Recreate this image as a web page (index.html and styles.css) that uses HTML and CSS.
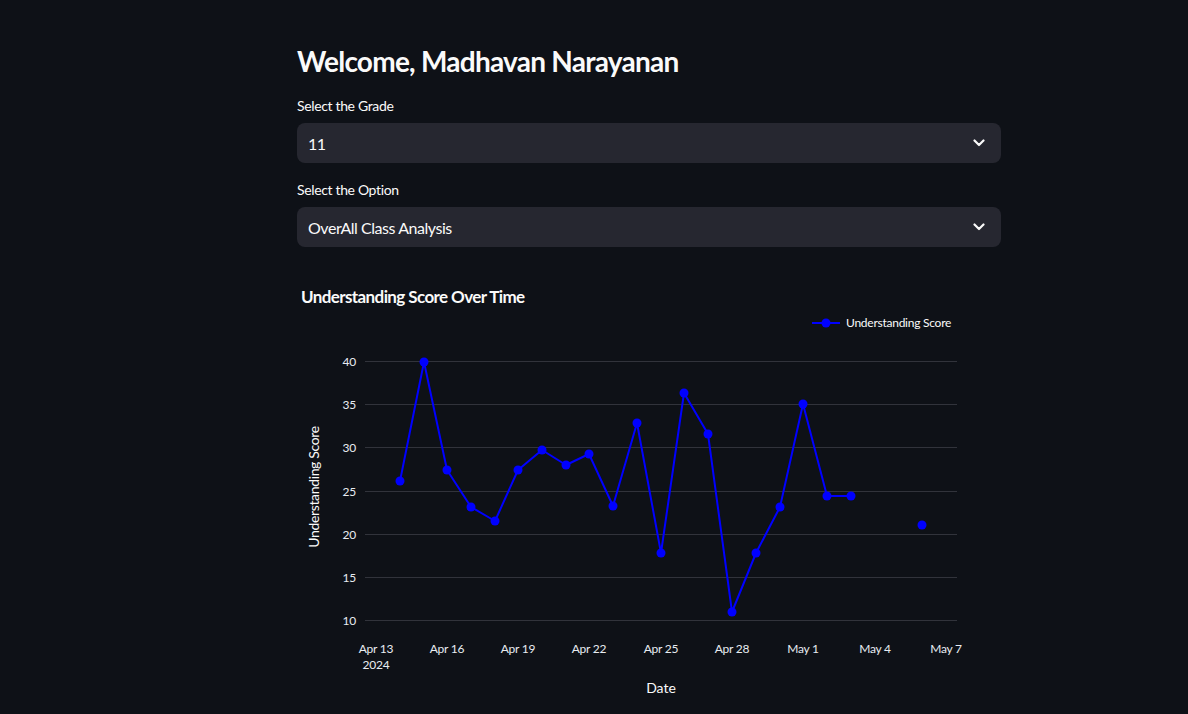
FILE: index.html
```html
<!DOCTYPE html>
<html>
<head>
<meta charset="utf-8">
<link rel="stylesheet" href="styles.css">
</head>
<body>
<div class="app">
  <main class="main">
    <h3 class="title">Welcome, Madhavan Narayanan</h3>
    <div class="field">
      <label class="label">Select the Grade</label>
      <div class="select">
        <span class="value">11</span>
        <svg class="chev" width="12" height="8" viewBox="0 0 12 8"><path d="M1.5 1.5 L6 6 L10.5 1.5" fill="none" stroke="#fafafa" stroke-width="2.2" stroke-linecap="round" stroke-linejoin="round"/></svg>
      </div>
    </div>
    <div class="field">
      <label class="label">Select the Option</label>
      <div class="select">
        <span class="value">OverAll Class Analysis</span>
        <svg class="chev" width="12" height="8" viewBox="0 0 12 8"><path d="M1.5 1.5 L6 6 L10.5 1.5" fill="none" stroke="#fafafa" stroke-width="2.2" stroke-linecap="round" stroke-linejoin="round"/></svg>
      </div>
    </div>
    <div class="chart">
      <svg width="704" height="434" viewBox="0 0 704 434">
        <g transform="translate(-297,-280)">
          <text class="ctitle" x="301" y="303">Understanding Score Over Time</text>
          <g class="grid">
            <line x1="365" x2="957" y1="361.5" y2="361.5"/>
            <line x1="365" x2="957" y1="404.5" y2="404.5"/>
            <line x1="365" x2="957" y1="447.5" y2="447.5"/>
            <line x1="365" x2="957" y1="491.5" y2="491.5"/>
            <line x1="365" x2="957" y1="534.5" y2="534.5"/>
            <line x1="365" x2="957" y1="577.5" y2="577.5"/>
            <line x1="365" x2="957" y1="620.5" y2="620.5"/>
          </g>
          <g class="tick ytick">
            <text x="356" y="366">40</text>
            <text x="356" y="409">35</text>
            <text x="356" y="452">30</text>
            <text x="356" y="496">25</text>
            <text x="356" y="539">20</text>
            <text x="356" y="582">15</text>
            <text x="356" y="625">10</text>
          </g>
          <g class="tick xtick">
            <text x="376" y="653">Apr 13</text>
            <text x="376" y="669">2024</text>
            <text x="447" y="653">Apr 16</text>
            <text x="518" y="653">Apr 19</text>
            <text x="589" y="653">Apr 22</text>
            <text x="661" y="653">Apr 25</text>
            <text x="732" y="653">Apr 28</text>
            <text x="803" y="653">May 1</text>
            <text x="875" y="653">May 4</text>
            <text x="946" y="653">May 7</text>
          </g>
          <text class="atitle" x="661" y="693">Date</text>
          <text class="atitle ytitle" transform="translate(319,487) rotate(-90)" x="0" y="0">Understanding Score</text>
          <polyline class="trace" points="400,481 424,362 447,470 471,507 495,521 518,470 542,450 566,465 589,454 613,506 637,423 661,553 684,393 708,434 732,612 756,553 780,507 803,404 827,496 851,496"/>
          <g class="markers">
            <circle cx="400" cy="481" r="4.5"/>
            <circle cx="424" cy="362" r="4.5"/>
            <circle cx="447" cy="470" r="4.5"/>
            <circle cx="471" cy="507" r="4.5"/>
            <circle cx="495" cy="521" r="4.5"/>
            <circle cx="518" cy="470" r="4.5"/>
            <circle cx="542" cy="450" r="4.5"/>
            <circle cx="566" cy="465" r="4.5"/>
            <circle cx="589" cy="454" r="4.5"/>
            <circle cx="613" cy="506" r="4.5"/>
            <circle cx="637" cy="423" r="4.5"/>
            <circle cx="661" cy="553" r="4.5"/>
            <circle cx="684" cy="393" r="4.5"/>
            <circle cx="708" cy="434" r="4.5"/>
            <circle cx="732" cy="612" r="4.5"/>
            <circle cx="756" cy="553" r="4.5"/>
            <circle cx="780" cy="507" r="4.5"/>
            <circle cx="803" cy="404" r="4.5"/>
            <circle cx="827" cy="496" r="4.5"/>
            <circle cx="851" cy="496" r="4.5"/>
            <circle cx="922" cy="525" r="4.5"/>
          </g>
          <g class="legend">
            <line class="trace" x1="812" x2="840" y1="323" y2="323"/>
            <circle cx="826" cy="323" r="4.5" class="lm"/>
            <text x="846" y="327">Understanding Score</text>
          </g>
        </g>
      </svg>
    </div>
  </main>
</div>
</body>
</html>
```

FILE: styles.css
```css
* { box-sizing: border-box; }
html, body {
  margin: 0;
  padding: 0;
  background: #0e1117;
  color: #fafafa;
  font-family: Lato, "Noto Sans", sans-serif;
}
.app {
  width: 1188px;
  height: 714px;
  overflow: hidden;
}
.main {
  width: 704px;
  margin-left: 297px;
  padding-top: 44px;
  display: flex;
  flex-direction: column;
}
.title {
  margin: 0;
  font-size: 28px;
  line-height: 34px;
  font-weight: 700;
  letter-spacing: -0.75px;
  color: #fafafa;
}
.field {
  margin-top: 16px;
  display: flex;
  flex-direction: column;
}
.field + .field { margin-top: 15px; }
.label {
  font-size: 14px;
  line-height: 24px;
  height: 24px;
  margin-bottom: 5px;
  letter-spacing: -0.35px;
  color: #fafafa;
}
.select {
  height: 40px;
  background: #262730;
  border-radius: 8px;
  display: flex;
  align-items: center;
  justify-content: space-between;
  padding: 0 16px 0 11px;
}
.value {
  font-size: 16px;
  letter-spacing: -0.45px;
  color: #fafafa;
}
.chev { display: block; }
.chart {
  margin-top: 33px;
  height: 434px;
}
.chart svg { display: block; }
.ctitle {
  font-size: 17px;
  font-weight: 700;
  letter-spacing: -0.6px;
  fill: #fafafa;
}
.grid line {
  stroke: #31333b;
  stroke-width: 1;
}
.tick text {
  font-size: 12px;
  letter-spacing: -0.2px;
  fill: #e8ecf2;
}
.ytick text { text-anchor: end; }
.xtick text { text-anchor: middle; }
.atitle {
  font-size: 14px;
  fill: #fafafa;
  text-anchor: middle;
}
.ytitle { letter-spacing: -0.35px; }
.trace {
  fill: none;
  stroke: #0000ff;
  stroke-width: 2;
  stroke-linejoin: round;
}
.markers circle, .lm {
  fill: #0000ff;
}
.legend text {
  font-size: 12px;
  letter-spacing: -0.25px;
  fill: #fafafa;
}
```
